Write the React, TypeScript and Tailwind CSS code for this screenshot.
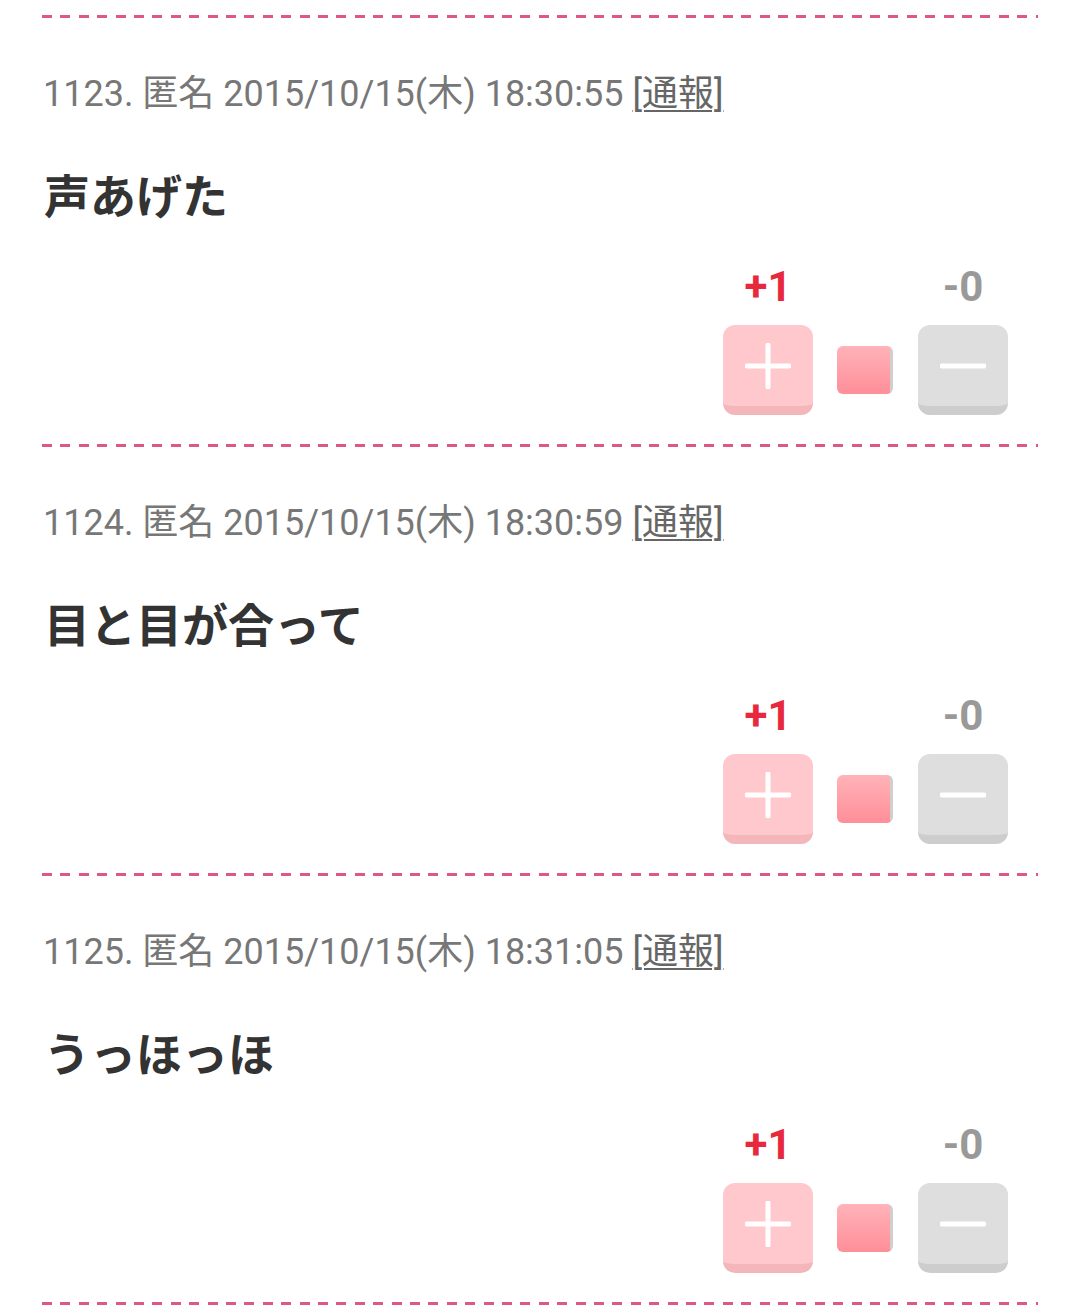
const posts = [
  { no: 1123, time: "18:30:55", body: "声あげた", plus: 1, minus: 0 },
  { no: 1124, time: "18:30:59", body: "目と目が合って", plus: 1, minus: 0 },
  { no: 1125, time: "18:31:05", body: "うっほっほ", plus: 1, minus: 0 },
];

function Dashes() {
  return (
    <div className="h-[3px] w-full bg-[repeating-linear-gradient(to_right,#dc5a82_0px,#dc5a82_10px,transparent_10px,transparent_18.4px)]" />
  );
}

function Votes({ plus, minus }: { plus: number; minus: number }) {
  return (
    <div className="flex flex-col items-end pr-[30px]">
      <div className="flex gap-[105px] font-['Roboto',sans-serif] text-[42px] leading-[42px] font-bold">
        <span className="w-[90px] text-center text-[#e8283c]">+{plus}</span>
        <span className="w-[90px] text-center text-[#999999]">-{minus}</span>
      </div>
      <div className="mt-[17px] flex items-center">
        <button className="flex h-[90px] w-[90px] items-center justify-center rounded-[12px] border-b-[9px] border-[#f3b6bb] bg-[#ffc8cc] pt-[1px]">
          <svg width="46" height="46" viewBox="0 0 46 46">
            <path d="M23 2v42M2 23h42" stroke="#fff" strokeWidth="5" strokeLinecap="round" />
          </svg>
        </button>
        <div className="ml-[24px] mr-[25px] flex h-[48px] w-[56px] overflow-hidden rounded-[6px]">
          <div className="flex-1 bg-[linear-gradient(to_bottom,#ffb3b9,#ff8e98)]" />
          <div className="w-[3px] bg-[#cfcfcf]" />
        </div>
        <button className="flex h-[90px] w-[90px] items-center justify-center rounded-[12px] border-b-[9px] border-[#cdcdcd] bg-[#dedede] pt-[1px]">
          <svg width="46" height="10" viewBox="0 0 46 10">
            <path d="M2 5h42" stroke="#fff" strokeWidth="5" strokeLinecap="round" />
          </svg>
        </button>
      </div>
    </div>
  );
}

export default function App() {
  return (
    <div className="min-h-[1308px] bg-white px-[42px] pt-[15px]">
      {posts.map((p) => (
        <div key={p.no}>
          <Dashes />
          <div className="mt-[55px] font-['Roboto','Noto_Sans_CJK_JP',sans-serif] text-[36px] leading-[42px] text-[#777777] pl-[1px]">
            {p.no}. 匿名 2015/10/15(木) {p.time}{" "}
            <a className="text-[#666666] underline decoration-[2px] underline-offset-[4px]">[通報]</a>
          </div>
          <div className="mt-[55px] pl-[2px] font-['Noto_Sans_CJK_JP',sans-serif] text-[46px] leading-[46px] font-bold text-[#333333]">
            {p.body}
          </div>
          <div className="mt-[50px] mb-[29px]">
            <Votes plus={p.plus} minus={p.minus} />
          </div>
        </div>
      ))}
      <Dashes />
    </div>
  );
}
